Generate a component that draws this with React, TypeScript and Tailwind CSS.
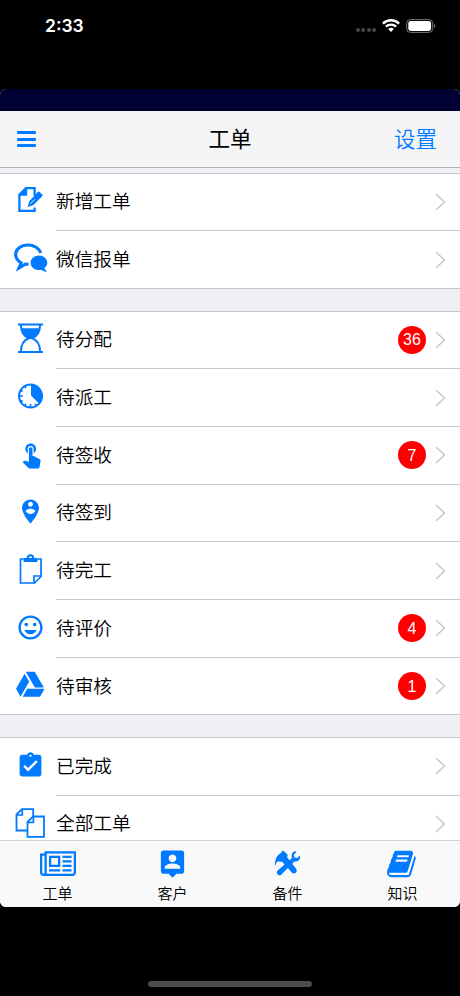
// src/App.tsx
import * as React from "react";
import { FaGoogleDrive } from "react-icons/fa";
import { MdAssignmentTurnedIn, MdTagFaces } from "react-icons/md";

type RowItem = {
    label: string;
    icon: React.ReactNode;
    badge?: number;
};

type TabItem = {
    label: string;
    icon: React.ReactNode;
};

function Glyph({ children }: { children: React.ReactNode }) {
    return (
        <svg viewBox="0 0 36 36" className="size-9 shrink-0" fill="none" stroke="currentColor">
            {children}
        </svg>
    );
}

function EditIcon() {
    return (
        <Glyph>
            <path d="M22.600 12.500V5.200H14L7.400 11.800V27.900H22.600V24.500" strokeWidth="2.300" />
            <path d="M6.500 12.800 15.200 4.500V12.800Z" fill="currentColor" stroke="none" />
            <path
                d="M26 8.800a1 1 0 0 1 1.400 0l3 2.900a1 1 0 0 1 0 1.400l-9.200 9.200-5.500 1.600 1.500-5.700Z"
                fill="currentColor"
                stroke="none"
            />
            <path d="m18.300 20.800 4.500-4.500" stroke="white" strokeWidth=".9" />
        </Glyph>
    );
}

function ChatIcon() {
    return (
        <Glyph>
            <path
                d="M28.600 13C27.400 8.200 22 5 15.800 5 9.100 5 3.600 9 3.600 14.300c0 3.800 2.300 6.600 5.500 8.500L7 28l6.300-3.900 3.200.1"
                strokeWidth="3.100"
            />
            <path
                d="M27 15.500c4.800 0 8.300 3.300 8.300 7.300 0 2.200-1.100 4-2.900 5.200l2.600 4.400-5.500-2.500c-5.800 1.100-10.900-2-10.900-7.100C18.600 18.800 22.300 15.500 27 15.500Z"
                fill="currentColor"
                stroke="none"
            />
        </Glyph>
    );
}

function HourglassIcon() {
    return (
        <Glyph>
            <path d="M6 3.500h25M6 31h25" strokeWidth="2.200" />
            <path
                d="M8.900 4C9 10.500 11.500 15.300 17 17.300c-5 1.600-8 6-8.100 13.700M28.100 4c-.1 6.500-2.600 11.300-8.100 13.300 5 1.600 8 6 8.100 13.700"
                strokeWidth="2"
            />
            <path d="M9.800 7.300H27.200c-.7 5-3.600 8.500-7.200 10.500h-3C13.400 15.800 10.500 12.300 9.800 7.300Z" fill="currentColor" stroke="none" />
        </Glyph>
    );
}

function ClockIcon() {
    return (
        <Glyph>
            <circle cx="18.500" cy="17" r="11.500" strokeWidth="2" />
            <path d="M19 5A12 12 0 0 1 27.500 25L19 16.500Z" fill="currentColor" stroke="none" />
            <path
                d="M7 17h4M18.500 28.500v-3.500M8.500 11.200l2.200 1.300M8.500 22.800l2.200-1.300M12.700 7l1.200 2.200M12.700 27l1.200-2.200M24.300 27l-1.200-2.200"
                strokeWidth="1.700"
            />
        </Glyph>
    );
}

function TouchIcon() {
    return (
        <svg viewBox="0 0 24 24" className="ml-0.5 size-[28.600px]" fill="currentColor">
            <path d="M9 11.240V7.500C9 6.120 10.120 5 11.500 5S14 6.120 14 7.500v3.740c1.210-.810 2-2.180 2-3.740C16 5.010 13.990 3 11.500 3S7 5.010 7 7.500c0 1.560.790 2.930 2 3.740zm9.840 4.630l-4.540-2.260c-.170-.070-.350-.110-.540-.110H13v-6c0-.830-.670-1.500-1.500-1.500S10 6.670 10 7.500v10.740l-3.430-.720c-.080-.010-.150-.030-.240-.030-.310 0-.590.130-.790.330l-.790.800 4.940 4.940c.270.270.650.440 1.060.440h6.790c.750 0 1.330-.550 1.440-1.280l.750-5.270c.010-.070.020-.140.020-.200 0-.620-.380-1.160-.910-1.380z" />
        </svg>
    );
}

function PinIcon() {
    return (
        <svg viewBox="0 0 24 24" className="size-[29px]" fill="currentColor">
            <path d="M12 2C8.140 2 5 5.140 5 9c0 5.250 7 13 7 13s7-7.750 7-13c0-3.860-3.140-7-7-7zm0 2c1.100 0 2 .900 2 2 0 1.110-.900 2-2 2s-2-.890-2-2c0-1.100.900-2 2-2zm0 10c-1.670 0-3.140-.850-4-2.150.020-1.320 2.670-2.050 4-2.050s3.980.730 4 2.050c-.860 1.300-2.330 2.150-4 2.150z" />
        </svg>
    );
}

function ClipboardIcon() {
    return (
        <Glyph>
            <path d="M11.500 7H8.500V31H22.500L29 24.500V7H25.500" strokeWidth="1.700" />
            <path d="M22 31.500V24H29.500" strokeWidth="1.700" />
            <path
                d="M11.500 10V6h3.300a3.700 3.700 0 0 1 7.400 0h3.300V10Z M18.500 4.300a1.600 1.600 0 0 0-1.600 1.600h3.200a1.600 1.600 0 0 0-1.600-1.600Z"
                fill="currentColor"
                fillRule="evenodd"
                stroke="none"
            />
        </Glyph>
    );
}

function CopiesIcon() {
    return (
        <Glyph>
            <path d="M15 25.500H4.500V9.500L10 4.200H21.200V11.500" strokeWidth="1.800" />
            <path d="M4.500 10h5.800V4.300" strokeWidth="1.700" />
            <path d="M15.500 16.800 21.200 11.500H32V31.800H15.500Z" strokeWidth="1.800" />
            <path d="M15.600 17.300h5.800V11.600" strokeWidth="1.700" />
        </Glyph>
    );
}

function NewspaperIcon() {
    return (
        <svg viewBox="0 0 2048 1408" className="h-[25px] w-9" fill="currentColor">
            <path d="M1024 384H640v384h384V384zm128 640v128H512v-128h640zm0-768v640H512V256h640zm640 768v128h-512v-128h512zm0-256v128h-512V768h512zm0-256v128h-512V512h512zm0-256v128h-512V256h512zM256 1216V256H128v960q0 26 19 45t45 19 45-19 19-45zm1664 0V128H384v1088q0 33-11 64h1483q26 0 45-19t19-45zM2048 0v1216q0 80-56 136t-136 56H192q-80 0-136-56T0 1216V128h256V0h1792z" />
        </svg>
    );
}

function CustomerIcon() {
    return (
        <svg viewBox="0 0 24 24" className="size-[31px]" fill="currentColor">
            <path d="M19 2H5c-1.110 0-2 .900-2 2v14c0 1.100.890 2 2 2h4l3 3 3-3h4c1.100 0 2-.900 2-2V4c0-1.100-.900-2-2-2zm-7 3c1.650 0 3 1.350 3 3s-1.350 3-3 3-3-1.350-3-3 1.350-3 3-3zM18 16H6v-.900c0-2 4-3.100 6-3.100s6 1.100 6 3.100v.900z" />
        </svg>
    );
}

function PartsIcon() {
    return (
        <svg viewBox="0 0 76 73" className="h-[24.500px] w-[25.500px]" fill="currentColor">
            {/* wrench */}
            <path d="M62 1c-8 0-14 7-12 17l1 3L8 58c-4 3-4 8 0 12s9 3 12-1L58 31c9 3 17-5 18-14l-1-4-9 8-8-2-2-8 8-8Z" />
            {/* hammer */}
            <path d="M1 46C-2 29 3 15 17 6l3-1-1-4 7-1 12 11-2 7 3 4 24 31c3 4 2 9-1 12s-9 3-12-1L24 35l-5-4-5 2-3-3C5 32 3 37 1 46Z" />
        </svg>
    );
}

function BookIcon() {
    return (
        <svg viewBox="0 0 1792 1792" className="h-[32px] w-[31px]" fill="currentColor">
            <path d="M1639 478q40 57 18 129l-275 906q-19 64-76.500 107.500t-122.500 43.500h-923q-77 0-148.500-53.500t-99.500-131.500q-24-67-2-127 0-4 3-27t4-37q1-8-3-21.500t-3-19.500q2-11 8-21t16.500-23.500 16.500-23.500q23-38 45-91.500t30-91.500q3-10 .5-30t-.5-28q3-11 17-28t17-23q21-36 42-92t25-90q1-9-2.500-32t.5-28q4-13 22-30.500t22-22.500q19-26 42.500-84.500t27.500-96.500q1-8-3-25.500t-2-26.500q2-8 9-18t18-23 17-21q8-12 16.500-30.500t15-35 16-36 19.500-32 26.500-23.500 36-11.500 47.500 5.500l-1 3q38-9 51-9h761q74 0 114 56t18 130l-274 906q-36 119-71.500 153.500t-128.500 34.500h-869q-27 0-38 15-11 16-1 43 24 70 144 70h923q29 0 56-15.500t35-41.500l300-987q7-22 5-57 38 15 59 43zm-1064 2q-4 13 2 22.500t20 9.500h608q13 0 25.500-9.500t16.500-22.500l21-64q4-13-2-22.500t-20-9.500h-608q-13 0-25.500 9.500t-16.500 22.500zm-83 256q-4 13 2 22.500t20 9.500h608q13 0 25.500-9.500t16.500-22.500l21-64q4-13-2-22.500t-20-9.500h-608q-13 0-25.500 9.500t-16.500 22.500z" />
        </svg>
    );
}

const createRows: RowItem[] = [
    { label: "新增工单", icon: <EditIcon /> },
    { label: "微信报单", icon: <ChatIcon /> },
];

const pendingRows: RowItem[] = [
    { label: "待分配", icon: <HourglassIcon />, badge: 36 },
    { label: "待派工", icon: <ClockIcon /> },
    { label: "待签收", icon: <TouchIcon />, badge: 7 },
    { label: "待签到", icon: <PinIcon /> },
    { label: "待完工", icon: <ClipboardIcon /> },
    { label: "待评价", icon: <MdTagFaces className="size-[29px]" />, badge: 4 },
    { label: "待审核", icon: <FaGoogleDrive className="size-[28.500px]" />, badge: 1 },
];

const doneRows: RowItem[] = [
    { label: "已完成", icon: <MdAssignmentTurnedIn className="size-[29px]" /> },
    { label: "全部工单", icon: <CopiesIcon /> },
];

const tabs: TabItem[] = [
    { label: "工单", icon: <NewspaperIcon /> },
    { label: "客户", icon: <CustomerIcon /> },
    { label: "备件", icon: <PartsIcon /> },
    { label: "知识", icon: <BookIcon /> },
];

function Row({ item, last }: { item: RowItem; last: boolean }) {
    return (
        <li className={["flex items-center", last ? "h-[56.700px]" : "h-[57.700px]"].join(" ")}>
            <span className="flex h-full w-14 shrink-0 items-center justify-center pr-[1px] pl-[5px] text-[#007aff]">
                <span className="-mt-[3px] flex size-9 shrink-0 items-center justify-center">{item.icon}</span>
            </span>
            <div
                className={[
                    "flex h-full flex-1 items-center pr-[14px]",
                    last ? "" : "border-b border-[#c8c7cc]",
                ].join(" ")}
            >
                <span className="flex-1 pt-px text-[18.700px] font-[350] text-black">{item.label}</span>
                {item.badge !== undefined && (
                    <span className="mr-[9px] flex size-7 items-center justify-center rounded-full bg-[#ff0000] pt-px text-[16px] text-white">
                        {item.badge}
                    </span>
                )}
                <svg viewBox="0 0 11 18" className="h-[18px] w-[11px]" fill="none" stroke="#c7c7cc" strokeWidth="1.500">
                    <path d="M1 1 9.500 9 1 17" />
                </svg>
            </div>
        </li>
    );
}

function Section({ rows }: { rows: RowItem[] }) {
    return (
        <ul className="shrink-0 border-y border-[#c8c7cc] bg-white">
            {rows.map((row, i) => (
                <Row key={row.label} item={row} last={i === rows.length - 1} />
            ))}
        </ul>
    );
}

function StatusBar() {
    return (
        <div className="flex h-[89px] shrink-0 items-start justify-between pt-[15px] pr-[24px] pl-[45px] text-white">
            <span className="font-['Inter'] text-[17.500px] leading-[22px] font-semibold">2:33</span>
            <div className="flex h-[21px] items-center">
                <div className="mt-[9px] mr-[6px] flex gap-[1.500px]">
                    {[0, 1, 2, 3].map((i) => (
                        <span key={i} className="size-1 rounded-full bg-[#464646]" />
                    ))}
                </div>
                <svg viewBox="0 0 18 13" className="mr-[6px] h-[13px] w-[18px]" fill="none" stroke="white" strokeWidth="2.400">
                    <path d="M.9 4.600a11.500 11.500 0 0 1 16.200 0M3.900 7.700a7.300 7.300 0 0 1 10.200 0" />
                    <path d="M9 12.900 6.200 10.100a4 4 0 0 1 5.600 0Z" fill="white" stroke="none" />
                </svg>
                <svg viewBox="0 0 30 14" className="h-[14px] w-[30px]">
                    <rect x=".7" y=".6" width="26" height="12.800" rx="3.800" fill="none" stroke="#777" />
                    <rect x="2.300" y="2.100" width="22.800" height="9.800" rx="2.400" fill="white" />
                    <path d="M28 5v4a2.200 2.200 0 0 0 0-4Z" fill="#777" />
                </svg>
            </div>
        </div>
    );
}

export default function App() {
    return (
        <div className="flex h-[996px] w-[460px] flex-col overflow-hidden bg-black font-['Liberation_Sans','Noto_Sans_CJK_SC',sans-serif]">
            <StatusBar />

            <div className="flex h-[818px] shrink-0 flex-col overflow-hidden rounded-[6px] bg-[#efeff4]">
                <div className="h-[22px] shrink-0 bg-[#000033]" />

                <header className="grid h-[57px] shrink-0 grid-cols-3 items-center border-b border-[#b2b2b2] bg-[#f5f5f8] pr-[23px] pl-[17px]">
                    <button type="button" className="flex w-[19px] flex-col gap-[3.500px]">
                        <span className="h-[3px] rounded-[1px] bg-[#007aff]" />
                        <span className="h-[3px] rounded-[1px] bg-[#007aff]" />
                        <span className="h-[3px] rounded-[1px] bg-[#007aff]" />
                    </button>
                    <h1 className="pt-[3px] pl-[6px] text-center text-[21.500px] font-normal text-black">工单</h1>
                    <button type="button" className="pt-[3px] text-right text-[21.500px] font-[350] text-[#007aff]">
                        设置
                    </button>
                </header>

                <main className="flex min-h-0 flex-1 flex-col gap-[21.600px] overflow-hidden pt-[4.600px]">
                    <Section rows={createRows} />
                    <Section rows={pendingRows} />
                    <Section rows={doneRows} />
                </main>

                <nav className="grid h-[67px] shrink-0 grid-cols-4 border-t border-[#d4d4d6] bg-[#f9f9f9]">
                    {tabs.map((tab) => (
                        <button key={tab.label} type="button" className="flex flex-col items-center pt-[6px]">
                            <span className="flex h-[33px] items-center text-[#007aff]">{tab.icon}</span>
                            <span className="mt-[3px] text-[15px] leading-[22px] font-[350] text-black">{tab.label}</span>
                        </button>
                    ))}
                </nav>
            </div>

            {/* Home indicator */}
            <div className="flex flex-1 items-end justify-center pb-[9px]">
                <span className="h-[6px] w-[164px] rounded-full bg-[#4d4d4d]" />
            </div>
        </div>
    );
}
